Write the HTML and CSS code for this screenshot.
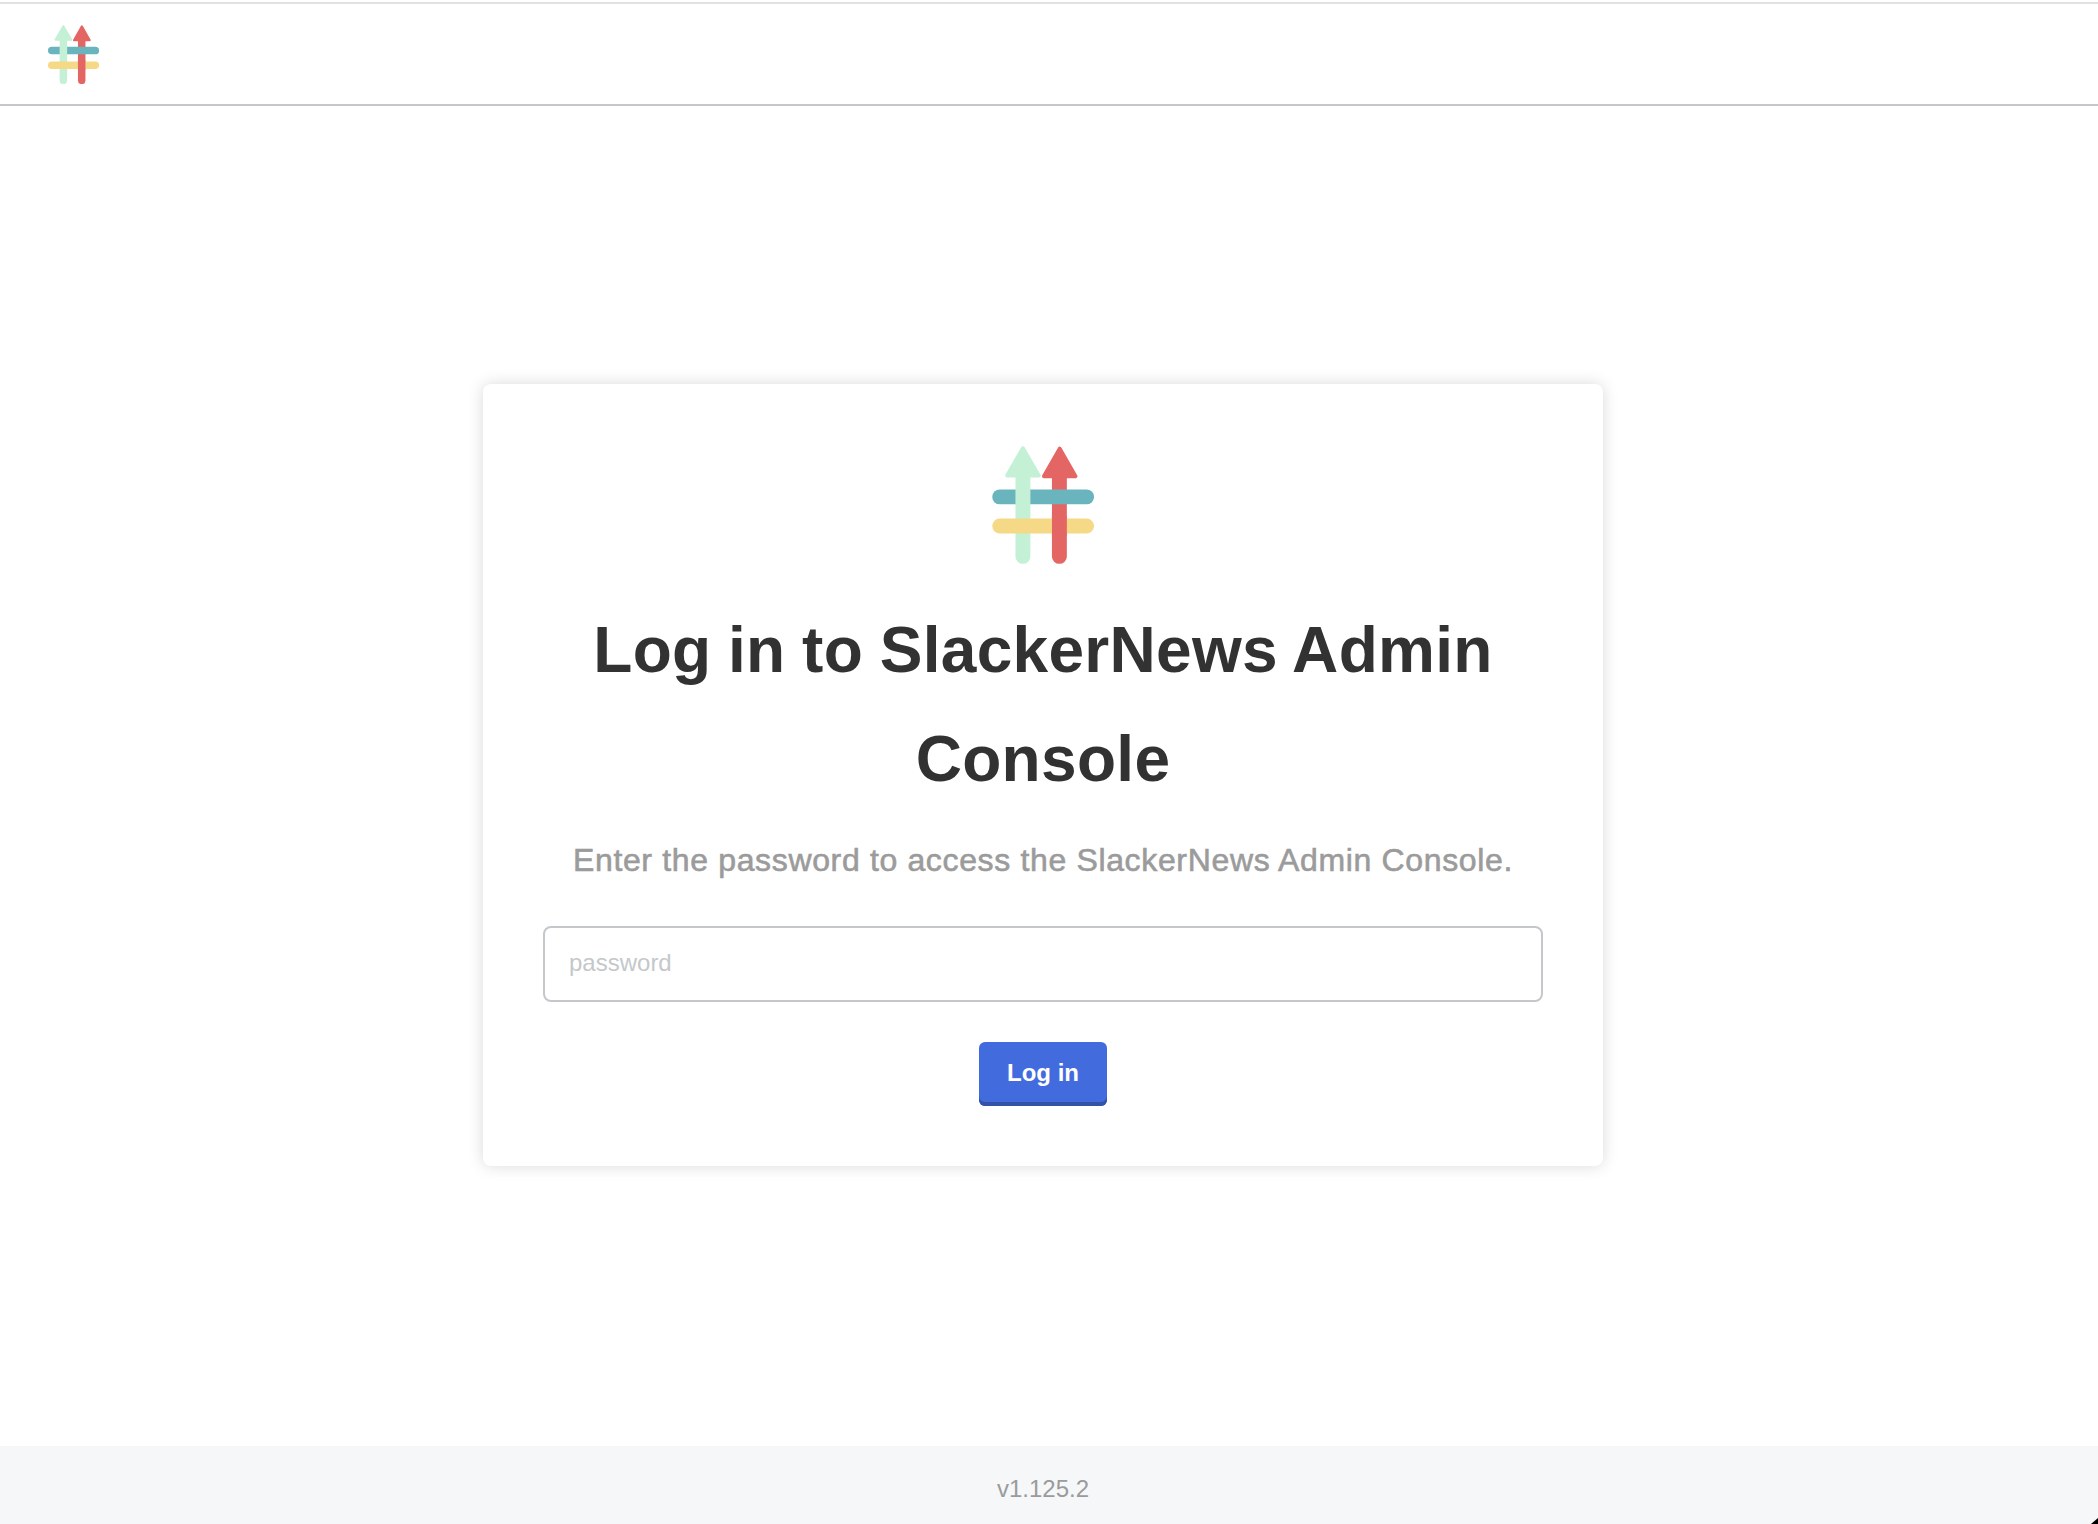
FILE: index.html
```html
<!DOCTYPE html>
<html lang="en">
<head>
<meta charset="utf-8">
<title>SlackerNews Admin Console</title>
<link rel="stylesheet" href="styles.css">
</head>
<body>
<svg class="sprite" aria-hidden="true">
  <symbol id="logo" viewBox="0 0 307 356">
    <g fill="#e36664" stroke="#e36664">
      <path d="M202.500 333V80" stroke-width="45" stroke-linecap="round" clip-path="url(#stem)"/>
      <path d="M203.500 8L251 91H156Z" stroke-width="12" stroke-linejoin="round"/>
    </g>
    <path d="M22.500 153.500H284.500" stroke="#6ab5bd" stroke-width="45" stroke-linecap="round"/>
    <g fill="#c4f0d6" stroke="#c4f0d6">
      <path d="M92.500 333V80" stroke-width="45" stroke-linecap="round" clip-path="url(#stem)"/>
      <path d="M92.500 7L140 89H45Z" stroke-width="12" stroke-linejoin="round"/>
    </g>
    <path d="M22.500 241.500H284.500" stroke="#f6d986" stroke-width="45" stroke-linecap="round"/>
    <path d="M202.500 212V270" stroke="#e36664" stroke-width="45"/>
  </symbol>
  <clipPath id="stem"><rect x="0" y="60" width="307" height="296"/></clipPath>
</svg>
<div class="page">
  <header class="navbar">
    <svg class="navbar-logo" role="img" aria-label="SlackerNews"><use href="#logo"/></svg>
  </header>
  <main class="content">
    <form class="card">
      <svg class="card-logo" aria-hidden="true"><use href="#logo"/></svg>
      <h1 class="title">Log in to SlackerNews Admin Console</h1>
      <p class="subtitle">Enter the password to access the SlackerNews Admin Console.</p>
      <input class="password" type="password" placeholder="password">
      <button class="submit" type="button">Log in</button>
    </form>
  </main>
  <footer class="footer">v1.125.2</footer>
  <span class="corner"></span>
</div>
</body>
</html>
```
FILE: styles.css
```css
* { box-sizing: border-box; }

body {
  margin: 0;
  background: #fff;
  font-family: "Liberation Sans", Arial, sans-serif;
}

.sprite { position: absolute; width: 0; height: 0; }

.page {
  position: relative;
  display: flex;
  flex-direction: column;
  height: 1524px;
  padding-top: 2px;
  overflow: hidden;
}

.navbar {
  flex: none;
  height: 104px;
  padding: 20.800px 48.300px;
  border-top: 2px solid #e1e1e1;
  border-bottom: 2px solid #c4c8ca;
}

.navbar-logo { display: block; width: 51.100px; height: 59.300px; }

.content {
  flex: 1;
  display: flex;
  flex-direction: column;
  align-items: center;
  padding: 278px 12px 0 0;
}

.card {
  display: flex;
  flex-direction: column;
  align-items: center;
  width: 1120px;
  height: 782px;
  padding: 62px 60px 60px;
  border-radius: 8px;
  background: #fff;
  box-shadow: 0 0 16px rgba(0, 0, 0, 0.15);
}

.card-logo { flex: none; width: 102.300px; height: 118px; }

.title {
  width: 1000px;
  margin: 32px 0 19px;
  color: #323232;
  font-size: 64px;
  font-weight: 700;
  line-height: 109px;
  letter-spacing: 0.300px;
  word-spacing: -1.500px;
  text-align: center;
}

.subtitle {
  margin: 0 0 39px;
  color: #9b9b9b;
  font-size: 32px;
  line-height: 54px;
  letter-spacing: 0.650px;
  white-space: nowrap;
  -webkit-text-stroke: 0.6px #9b9b9b;
}

.password {
  flex: none;
  width: 1000px;
  height: 76px;
  padding: 0 24px 2px;
  border: 2px solid #c4c8ca;
  border-radius: 8px;
  background: #fff;
  font: 24px "Liberation Sans", Arial, sans-serif;
}

.password::placeholder { color: #c4c8ca; opacity: 1; }

.submit {
  flex: none;
  width: 128px;
  height: 64px;
  margin-top: 40px;
  padding: 0 0 2px;
  border: 0;
  border-radius: 6px;
  background: #426cde;
  box-shadow: inset 0 -4px #3353a9;
  color: #fff;
  font: 700 24px/60px "Liberation Sans", Arial, sans-serif;
}

.footer {
  flex: none;
  height: 78px;
  padding: 29px 12px 0 0;
  background: #f5f7f9;
  color: #9b9b9b;
  font-size: 24px;
  line-height: 28px;
  text-align: center;
}

/* Dark rounded window corner showing past the bottom right of the page */
.corner {
  position: absolute;
  right: 0;
  bottom: 0;
  width: 7px;
  height: 6px;
  background: #000;
  clip-path: polygon(100% 0, 100% 100%, 0 100%);
}
```
